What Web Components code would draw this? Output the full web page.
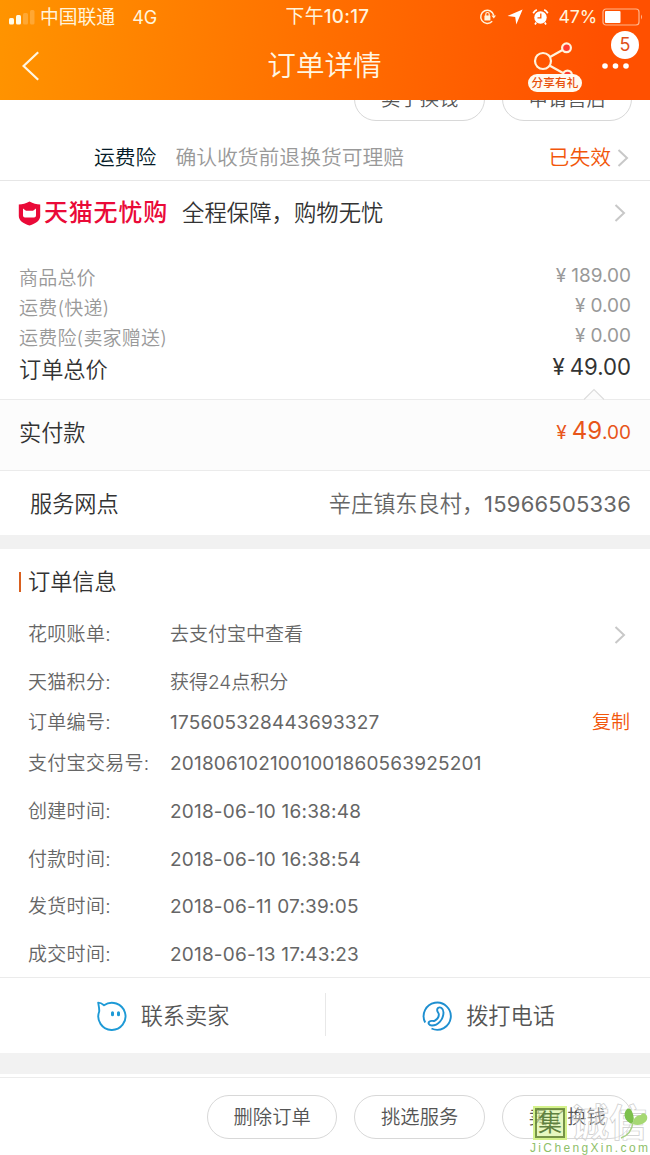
<!DOCTYPE html>
<html lang="zh-CN">
<head>
<meta charset="utf-8">
<title>订单详情</title>
<style>
  html, body { margin: 0; }

  body {
    width: 650px;
    height: 1155px;
    overflow: hidden;
    background: #fff;
    color: #666;
    font-family: Inter, "Noto Sans CJK SC", sans-serif;
    font-weight: 350;
  }
</style>
</head>
<body>
<order-page></order-page>

<script>
class StatusBar extends HTMLElement {
  constructor() {
    super()
    this.attachShadow({ mode: 'open' })
  }

  connectedCallback() {
    this.shadowRoot.innerHTML = `
      <style>
        :host {
          display: grid;
          grid-template-columns: 1fr auto 1fr;
          align-items: center;
          height: 32px;
          padding: 0 7px 0 9px;
          font-size: 18px;
          line-height: 32px;
          font-weight: 400;
          color: #fff4dc;
        }
        .left, .right { display: flex; align-items: center; }
        .left { margin-top: 2px; }
        .right { justify-content: flex-end; }
        .carrier { margin-left: 5px; font-size: 18.8px; }
        .network { margin-left: 17px; font-size: 18px; }
        .time { font-size: 18.8px; letter-spacing: .3px; margin-left: 3px; }
        .time b { font-weight: 500; }
        .percent { margin: 0 5px 0 10px; font-size: 17.8px; letter-spacing: -0.2px; }
        svg { display: block; }
      </style>
      <div class="left">
        <svg width="26" height="16" viewBox="0 0 26 16" fill="#fffbe8">
          <rect x="0" y="8" width="5" height="6.500" rx="1.500"/>
          <rect x="7" y="5" width="5" height="9.500" rx="1.500"/>
          <rect x="14" y="3" width="5" height="11.500" rx="1.500" opacity=".22"/>
          <rect x="21" y="0" width="4.500" height="14.500" rx="1.500" opacity=".22"/>
        </svg>
        <span class="carrier">中国联通</span>
        <span class="network">4G</span>
      </div>
      <span class="time">下午<b>10:17</b></span>
      <div class="right">
        <svg width="18" height="18" viewBox="0 0 18 18" fill="none" stroke="#fff4dc" stroke-width="1.500">
          <path d="M13.200 13.300A6.600 6.600 0 1 1 14.800 7.500"/>
          <path d="M12.400 7.600h4.600l-2.200 3z" fill="#fff4dc" stroke="none"/>
          <rect x="5.400" y="7.500" width="6" height="5" rx=".5" fill="#fff4dc" stroke="none"/>
          <path d="M6.800 8V6.200a1.700 1.700 0 0 1 3.400 0V8" stroke-width="1.200"/>
        </svg>
        <svg style="margin-left:10px" width="16" height="16" viewBox="0 0 16 16" fill="#fff">
          <path d="M15.600.4 9.300 15.600 8.200 8 .6 6.900z"/>
        </svg>
        <svg style="margin-left:9px" width="17" height="18" viewBox="0 0 17 18">
          <circle cx="8.500" cy="9.500" r="6.200" fill="#fff"/>
          <path d="M8.800 5.500V9.800H5.500" fill="none" stroke="#ff5a00" stroke-width="1.300"/>
          <path d="M1.200 5.200A9 9 0 0 1 4.800 1.800M15.800 5.200A9 9 0 0 0 12.200 1.800M4.200 14.500 3 16.500M12.800 14.500 14 16.500" fill="none" stroke="#fff" stroke-width="1.700"/>
        </svg>
        <span class="percent">47%</span>
        <svg width="41" height="18" viewBox="0 0 41 18">
          <rect x="1" y="1" width="36" height="16" rx="3" fill="none" stroke="#ffb58c" stroke-width="1.200"/>
          <rect x="3" y="3" width="15.500" height="12" rx="1" fill="#fff"/>
          <path d="M39 6.500q2 2.500 0 5z" fill="#ffb58c"/>
        </svg>
      </div>
    `
  }
}
customElements.define('status-bar', StatusBar)

class NavBar extends HTMLElement {
  constructor() {
    super()
    this.attachShadow({ mode: 'open' })
  }

  connectedCallback() {
    this.shadowRoot.innerHTML = `
      <style>
        :host {
          display: grid;
          grid-template-columns: 1fr auto 1fr;
          align-items: center;
          height: 68px;
          padding: 0 20px 0 21px;
          color: #fff6e2;
        }
        svg { display: block; }
        h1 {
          margin: 0 2px 0 0;
          font-size: 28.6px;
          line-height: 40px;
          font-weight: inherit;
        }
        .actions {
          display: flex;
          justify-content: flex-end;
          align-items: center;
          gap: 19px;
        }
        .share, .more { position: relative; }
        .share { width: 54px; height: 54px; }
        .share svg { margin-left: 5px; margin-top: 2px; }
        .share span {
          position: absolute;
          left: 0;
          top: 35px;
          width: 54px;
          height: 18px;
          border-radius: 9px;
          background: #fffaf0;
          color: #e8500a;
          font-size: 11.7px;
          line-height: 18px;
          font-weight: 500;
          text-align: center;
        }
        .badge {
          position: absolute;
          right: -9px;
          top: -32px;
          width: 28px;
          height: 28px;
          border-radius: 14px;
          background: #fff;
          color: #e0501a;
          font-size: 18px;
          line-height: 28px;
          text-align: center;
          font-weight: 400;
        }
      </style>
      <svg width="20" height="32" viewBox="0 0 20 32" fill="none" stroke="#fff6e2" stroke-width="2.200">
        <path d="M17.200 2.200 2.600 16 17.200 29.800"/>
      </svg>
      <h1><slot></slot></h1>
      <div class="actions">
        <div class="share">
          <svg width="42" height="42" viewBox="0 0 42 42" fill="none" stroke="#fff3dc" stroke-width="2.200">
            <circle cx="10" cy="20" r="8"/>
            <path d="M17 16 29.500 9M16.500 24.500 30 32"/>
            <circle cx="33.500" cy="6.800" r="4.400" fill="#ff3b30"/>
            <circle cx="34.500" cy="34" r="4.400" fill="#ff3b30"/>
          </svg>
          <span>分享有礼</span>
        </div>
        <div class="more">
          <svg width="29" height="6" viewBox="0 0 29 6" fill="#fff">
            <circle cx="4" cy="3" r="2.800"/>
            <circle cx="14.500" cy="3" r="2.800"/>
            <circle cx="25" cy="3" r="2.800"/>
          </svg>
          <span class="badge">${this.getAttribute('data-count')}</span>
        </div>
      </div>
    `
  }
}
customElements.define('nav-bar', NavBar)

class PillButton extends HTMLElement {
  constructor() {
    super()
    this.attachShadow({ mode: 'open' })
    this.shadowRoot.innerHTML = `
      <style>
        :host {
          display: block;
          box-sizing: border-box;
          width: 130.500px;
          height: 44px;
          border: 1px solid #d8d8d8;
          border-radius: 22px;
          font-size: 19.3px;
          line-height: 43px;
          text-align: center;
          color: #555;
        }
      </style>
      <slot></slot>
    `
  }
}
customElements.define('pill-button', PillButton)

class ArrowIcon extends HTMLElement {
  constructor() {
    super()
    this.attachShadow({ mode: 'open' })
    this.shadowRoot.innerHTML = `
      <style>
        :host { display: block; }
        svg { display: block; }
      </style>
      <svg width="12" height="20" viewBox="0 0 12 20" fill="none" stroke="#c8c8c8" stroke-width="2">
        <path d="M1.500 2 10 10 1.500 18"/>
      </svg>
    `
  }
}
customElements.define('arrow-icon', ArrowIcon)

// A line with something on the left and something on the right
class ListRow extends HTMLElement {
  constructor() {
    super()
    this.attachShadow({ mode: 'open' })
    this.shadowRoot.innerHTML = `
      <style>
        :host {
          display: flex;
          align-items: center;
          justify-content: space-between;
          box-sizing: border-box;
          padding: 0 19px;
          white-space: nowrap;
        }
        div { display: flex; align-items: center; }
      </style>
      <div><slot></slot></div>
      <div><slot name="end"></slot></div>
    `
  }
}
customElements.define('list-row', ListRow)

class InfoRow extends HTMLElement {
  constructor() {
    super()
    this.attachShadow({ mode: 'open' })
  }

  connectedCallback() {
    this.shadowRoot.innerHTML = `
      <style>
        :host {
          display: grid;
          grid-template-columns: 142px 1fr auto;
          align-items: center;
          box-sizing: border-box;
          height: 47.6px;
          padding: 0 20px 0 28px;
          font-size: 19px;
          line-height: 28px;
          white-space: nowrap;
        }
        .label { letter-spacing: .3px; }
        .value {
          font-weight: var(--value-weight, inherit);
          letter-spacing: var(--value-spacing, 0);
        }
      </style>
      <span class="label">${this.getAttribute('data-label')}:</span>
      <span class="value"><slot></slot></span>
      <slot name="end"></slot>
    `
  }
}
customElements.define('info-row', InfoRow)

class TmallLogo extends HTMLElement {
  constructor() {
    super()
    this.attachShadow({ mode: 'open' })
    this.shadowRoot.innerHTML = `
      <style>
        :host {
          display: flex;
          align-items: center;
          gap: 3px;
          color: #ea0a38;
          font-size: 24px;
          line-height: 32px;
          font-weight: 500;
          letter-spacing: .8px;
        }
      </style>
      <svg width="23" height="25" viewBox="0 0 23 25">
        <path d="M11.500.5C8 2.500 4.500 3.200.8 3.500V15C.8 19.500 5 22.500 11.500 24.500 18 22.500 22.200 19.500 22.200 15V3.500C18.500 3.200 15 2.500 11.500.5z" fill="#ea0a38"/>
        <path d="M5 7.500 8 9.800h7l3-2.300V14.500a2 2 0 0 1-2 2H7a2 2 0 0 1-2-2z" fill="#fff"/>
      </svg>
      <span>天猫无忧购</span>
    `
  }
}
customElements.define('tmall-logo', TmallLogo)

class ContactLink extends HTMLElement {
  constructor() {
    super()
    this.attachShadow({ mode: 'open' })
    this.shadowRoot.innerHTML = `
      <style>
        :host {
          display: flex;
          align-items: center;
          justify-content: center;
          gap: 13px;
          font-size: 22.2px;
          line-height: 32px;
          color: #555;
        }
      </style>
      <slot name="icon"></slot>
      <span><slot></slot></span>
    `
  }
}
customElements.define('contact-link', ContactLink)

class SiteMark extends HTMLElement {
  constructor() {
    super()
    this.attachShadow({ mode: 'open' })
    this.shadowRoot.innerHTML = `
      <style>
        :host {
          display: block;
          position: absolute;
          left: 530px;
          top: 1104px;
          width: 120px;
          height: 51px;
          white-space: nowrap;
        }
        .top { display: flex; align-items: center; height: 37px; }
        .seal {
          box-sizing: border-box;
          width: 30px;
          height: 30px;
          margin-left: 5px;
          border: 2px solid rgba(98, 130, 50, .85);
          outline: 2px solid #d5f28c;
          background: rgba(214, 244, 150, .6);
          color: #5f8140;
          font-size: 24px;
          line-height: 25px;
          font-weight: 400;
          text-align: center;
        }
        .name {
          margin-left: 6px;
          font-size: 38px;
          line-height: 37px;
          font-weight: 700;
          color: rgba(255, 255, 255, .35);
          -webkit-text-stroke: .7px #cdcdcd;
        }
        .leaf { position: absolute; left: 90px; top: 3px; }
        .url {
          font-family: "Liberation Sans", sans-serif;
          font-size: 12px;
          line-height: 14px;
          font-weight: 400;
          letter-spacing: 2.35px;
          color: #8fbf6a;
        }
      </style>
      <div class="top">
        <span class="seal">集</span>
        <span class="name">诚信</span>
      </div>
      <svg class="leaf" width="30" height="34" viewBox="0 0 30 34">
        <path d="M12.500 17C5 15 2 7 7 2 9 1 11 2 12 4.500 14 9 14.500 13 12.500 17z" fill="#7cc04c"/>
        <path d="M13 17C13 11 17 8 21 8 22 5 26 6 27 9 29 15 20 20 13 17z" fill="#a6d873"/>
        <path d="M13 15C12 24 7 29 1 31" fill="none" stroke="#a9d184" stroke-width="1.500"/>
      </svg>
      <div class="url">JiChengXin.com</div>
    `
  }
}
customElements.define('site-mark', SiteMark)

class OrderPage extends HTMLElement {
  constructor() {
    super()
    this.attachShadow({ mode: 'open' })
  }

  connectedCallback() {
    this.shadowRoot.innerHTML = `
      <style>${css}</style>
      <header>
        <status-bar></status-bar>
        <nav-bar data-count="5">订单详情</nav-bar>
      </header>

      <div class="buttons hidden-top">
        <pill-button>卖了换钱</pill-button>
        <pill-button>申请售后</pill-button>
      </div>

      <list-row class="insurance">
        <span class="name">运费险</span>
        <span class="note">确认收货前退换货可理赔</span>
        <span slot="end" class="accent">已失效</span>
        <arrow-icon slot="end"></arrow-icon>
      </list-row>

      <list-row class="worry-free">
        <tmall-logo></tmall-logo>
        <span class="slogan">全程保障，购物无忧</span>
        <arrow-icon slot="end"></arrow-icon>
      </list-row>

      <section class="prices">
        <list-row>商品总价<span slot="end"><i>¥</i>189.00</span></list-row>
        <list-row>运费(快递)<span slot="end"><i>¥</i>0.00</span></list-row>
        <list-row>运费险(卖家赠送)<span slot="end"><i>¥</i>0.00</span></list-row>
        <list-row class="sum">订单总价<span slot="end"><i>¥</i>49.00</span></list-row>
      </section>

      <list-row class="paid">
        实付款
        <span slot="end" class="amount"><i>¥</i><b>49</b>.00</span>
        <svg slot="end" class="notch" width="22" height="12" viewBox="0 0 22 12">
          <path d="M1 11.500 11 1.500 21 11.500" fill="#fcfcfc" stroke="#ddd" stroke-width="1.200"/>
        </svg>
      </list-row>

      <list-row class="station">
        服务网点
        <span slot="end">辛庄镇东良村，<span class="phone">15966505336</span></span>
      </list-row>

      <section class="info">
        <h2>订单信息</h2>
        <info-row data-label="花呗账单">去支付宝中查看<arrow-icon slot="end"></arrow-icon></info-row>
        <info-row data-label="天猫积分">获得24点积分</info-row>
        <info-row class="number order-no" data-label="订单编号">175605328443693327<span slot="end" class="copy">复制</span></info-row>
        <info-row class="number trade-no" data-label="支付宝交易号">2018061021001001860563925201</info-row>
        <info-row class="number" data-label="创建时间">2018-06-10 16:38:48</info-row>
        <info-row class="number" data-label="付款时间">2018-06-10 16:38:54</info-row>
        <info-row class="number" data-label="发货时间">2018-06-11 07:39:05</info-row>
        <info-row class="number" data-label="成交时间">2018-06-13 17:43:23</info-row>
      </section>

      <section class="contact">
        <contact-link>
          <svg slot="icon" width="32" height="32" viewBox="0 0 32 32" fill="none" stroke="#1e9ad6" stroke-width="1.900">
            <path d="M8 5.300A13.600 13.600 0 1 1 3.200 11.500C3.500 9 2.600 5 2.200 2.600 4.500 2.600 6.300 3.800 8 5.300z" stroke-linejoin="round"/>
            <path d="M16.500 12.700v2M22.500 12.700v2" stroke-width="3" stroke-linecap="round"/>
          </svg>
          联系卖家
        </contact-link>
        <contact-link>
          <svg slot="icon" width="32" height="32" viewBox="0 0 32 32" fill="none" stroke="#1e8fd0" stroke-width="1.900">
            <path d="M4.200 22.500A13.600 13.600 0 1 1 10.500 28.500"/>
            <path d="M17 8C19 6.500 22.500 8 22.500 12.500 22.500 19.500 17 25.500 11 25.500 8 25.500 6.500 23 8.500 21.500 10.500 20 12 21.500 13.500 20.800 16 19.500 18 16.500 17.800 14 17.700 12.500 14.500 10.500 17 8z"/>
          </svg>
          拨打电话
        </contact-link>
      </section>

      <footer class="buttons">
        <pill-button>删除订单</pill-button>
        <pill-button>挑选服务</pill-button>
        <pill-button>卖了换钱</pill-button>
      </footer>
      <site-mark></site-mark>
    `
  }
}

const css = `
  :host {
    display: block;
    position: relative;
    width: 650px;
    height: 1155px;
    overflow: hidden;
  }

  i { font-style: normal; }

  header {
    position: relative;
    z-index: 1;
    height: 100px;
    background: linear-gradient(97deg, #ff9400 0%, #ff7200 45%, #ff5000 92%);
  }

  .buttons {
    display: flex;
    justify-content: flex-end;
    gap: 17px;
    padding-right: 17.6px;
  }

  /* Scrolled half way under the header */
  .hidden-top { margin-top: -23px; }

  .insurance {
    height: 60px;
    padding: 14px 21px 0 94px;
    border-bottom: 1px solid #e6e6e6;
    font-size: 20.8px;
    line-height: 30px;

    & .name { color: #051b28; }
    & .note { margin-left: 19px; color: #999; }
    & .accent { margin-right: 6px; color: #f2560a; }
  }

  .worry-free {
    height: 65px;
    padding: 0 24px 1px 18px;

    & .slogan {
      margin-left: 14px;
      font-size: 22.4px;
      line-height: 32px;
      color: #333;
    }
  }

  .prices {
    height: 137px;
    padding-top: 17.500px;
    box-sizing: border-box;

    & list-row {
      height: 30px;
      font-size: 19px;
      line-height: 28px;
      letter-spacing: .2px;
      color: #999;
    }
    & [slot="end"] {
      margin-top: -5px;
      font-weight: 400;
      letter-spacing: 0;
    }
    & i { margin-right: 5px; }
    & .sum {
      height: 32px;
      font-size: 22.2px;
      letter-spacing: 0;
      color: #333;
    }
  }

  .paid {
    position: relative;
    height: 72px;
    margin-top: 16px;
    padding-bottom: 8px;
    border: solid #ebebeb;
    border-width: 1px 0;
    background: #fcfcfc;
    font-size: 22.2px;
    color: #333;

    & .amount {
      margin-top: -2px;
      font-size: 19px;
      font-weight: 400;
      color: #e8551a;
    }
    & i { margin-right: 5px; }
    & b { font-size: 24px; font-weight: 400; }
    & .notch {
      position: absolute;
      right: 45px;
      top: -12px;
    }
  }

  .station {
    height: 64px;
    padding-left: 30px;
    padding-bottom: 2px;
    font-size: 22.2px;
    color: #333;

    & [slot="end"] { color: #666; }
    & .phone {
      font-size: 22px;
      font-weight: 400;
      letter-spacing: .2px;
    }
  }

  .info {
    height: 443px;
    box-sizing: border-box;
    border-top: 14px solid #f1f1f1;
    border-bottom: 1px solid #ebebeb;

    & h2 {
      display: flex;
      align-items: center;
      margin: 17px 0 14.500px 19px;
      font-size: 22.2px;
      line-height: 31px;
      font-weight: inherit;
      color: #333;
    }
    & h2::before {
      content: "";
      width: 2px;
      height: 20px;
      margin-right: 7px;
      background: #d9601f;
    }
    & .number {
      --value-weight: 400;
      --value-spacing: .2px;
    }
    & .order-no { height: 33px; }
    & .trade-no { height: 48.500px; }
    & arrow-icon { margin-right: 4px; }
    & .copy { color: #f2560a; }
  }

  .contact {
    display: grid;
    grid-template-columns: 326px 1fr;
    height: 100px;
    box-sizing: border-box;
    border-bottom: 1px solid #ececec;
    background: linear-gradient(#fff 75px, #f2f2f2 75px, #f2f2f2 96px, #fff 96px);
    padding-bottom: 24px;

    & contact-link:first-child {
      padding-right: 1px;
      background: linear-gradient(#e8e8e8, #e8e8e8) right 15px / 1px 43px no-repeat;
    }
  }

  footer { padding-top: 17px; }
`

customElements.define('order-page', OrderPage)
</script>
</body>
</html>
